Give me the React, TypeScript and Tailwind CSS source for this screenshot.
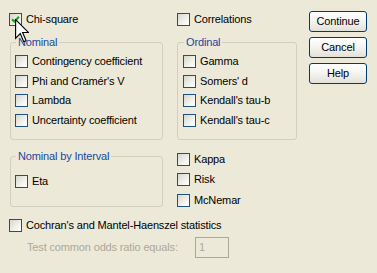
import React from "react";

type BoxProps = { label: string; checked?: boolean; className?: string };

function Check({ label, checked, className = "" }: BoxProps) {
  return (
    <div className={`flex items-center gap-[4px] h-[13px] ${className}`}>
      <span className="relative w-[13px] h-[13px] shrink-0 border border-[#1c5180] bg-linear-to-br from-[#d6d6cf] via-[#eeeee9] to-white">
        {checked && (
          <svg viewBox="0 0 11 11" className="absolute inset-0 w-[11px] h-[11px]">
            <path d="M2 5.2 L4.3 7.5 L9 2.8" fill="none" stroke="#21a121" strokeWidth="2" />
          </svg>
        )}
      </span>
      <span className="leading-[13px] whitespace-nowrap tracking-[-0.15px]">{label}</span>
    </div>
  );
}

function Group({
  title,
  className,
  children,
}: {
  title: string;
  className: string;
  children: React.ReactNode;
}) {
  return (
    <fieldset className={`border border-[#d0d0bf] rounded-[3px] ${className}`}>
      <legend className="ml-[1px] px-[2px] leading-[13px] text-[#1a47a0] tracking-[-0.15px]">
        {title}
      </legend>
      {children}
    </fieldset>
  );
}

function Btn({ label }: { label: string }) {
  return (
    <button className="w-[58px] h-[21px] rounded-[3px] border border-[#003c74] bg-linear-to-b from-white via-[#f4f4ef] to-[#e1e0d8] text-[11px] leading-[19px] text-black tracking-[-0.15px]">
      {label}
    </button>
  );
}

export default function App() {
  return (
    <div className="relative w-[377px] h-[273px] overflow-hidden bg-[#ece9d8] text-[11px] text-black font-['Liberation_Sans',Arial,sans-serif] pl-[9px] pt-[13px]">
      <div className="flex">
        {/* left column */}
        <div className="w-[154px] flex flex-col">
          <Check label="Chi-square" checked />
          <Group title="Nominal" className="ml-[1px] mt-[10px] w-[153px] h-[104px] pl-[4px] pt-[6px]">
            <div className="flex flex-col">
              <Check label="Contingency coefficient" />
              <Check label="Phi and Cramér's V" className="mt-[7px]" />
              <Check label="Lambda" className="mt-[6px]" />
              <Check label="Uncertainty coefficient" className="mt-[7px]" />
            </div>
          </Group>
          <Group title="Nominal by Interval" className="ml-[1px] mt-[10px] w-[153px] h-[57px] pl-[4px] pt-[12px]">
            <Check label="Eta" />
          </Group>
        </div>

        {/* right column */}
        <div className="ml-[14px] w-[120px] flex flex-col">
          <Check label="Correlations" />
          <Group title="Ordinal" className="mt-[10px] w-[120px] h-[104px] pl-[5px] pt-[6px]">
            <div className="flex flex-col">
              <Check label="Gamma" />
              <Check label="Somers' d" className="mt-[7px]" />
              <Check label="Kendall's tau-b" className="mt-[6px]" />
              <Check label="Kendall's tau-c" className="mt-[7px]" />
            </div>
          </Group>
          <Check label="Kappa" className="mt-[13px]" />
          <Check label="Risk" className="mt-[7px]" />
          <Check label="McNemar" className="mt-[8px]" />
        </div>

        {/* buttons */}
        <div className="ml-[12px] mt-[-2px] flex flex-col gap-[5px]">
          <Btn label="Continue" />
          <Btn label="Cancel" />
          <Btn label="Help" />
        </div>
      </div>

      <Check label="Cochran's and Mantel-Haenszel statistics" className="mt-[12px]" />
      <div className="flex items-center mt-[5px] pl-[18px]">
        <span className="w-[168px] text-[#aca899] tracking-[-0.15px]">Test common odds ratio equals:</span>
        <div className="w-[34px] h-[21px] border border-[#aca899] px-[3px] leading-[19px] text-[#aca899]">1</div>
      </div>

      {/* mouse pointer */}
      <svg className="absolute left-[15px] top-[19px]" width="14" height="24" viewBox="0 0 12 20.5">
        <path
          d="M0.5 0.5 L0.5 16.5 L4.5 12.5 L7.5 19.5 L9.5 18.5 L6.5 11.5 L11.5 11.5 Z"
          fill="#fff"
          stroke="#000"
          strokeWidth="1"
        />
      </svg>
    </div>
  );
}
